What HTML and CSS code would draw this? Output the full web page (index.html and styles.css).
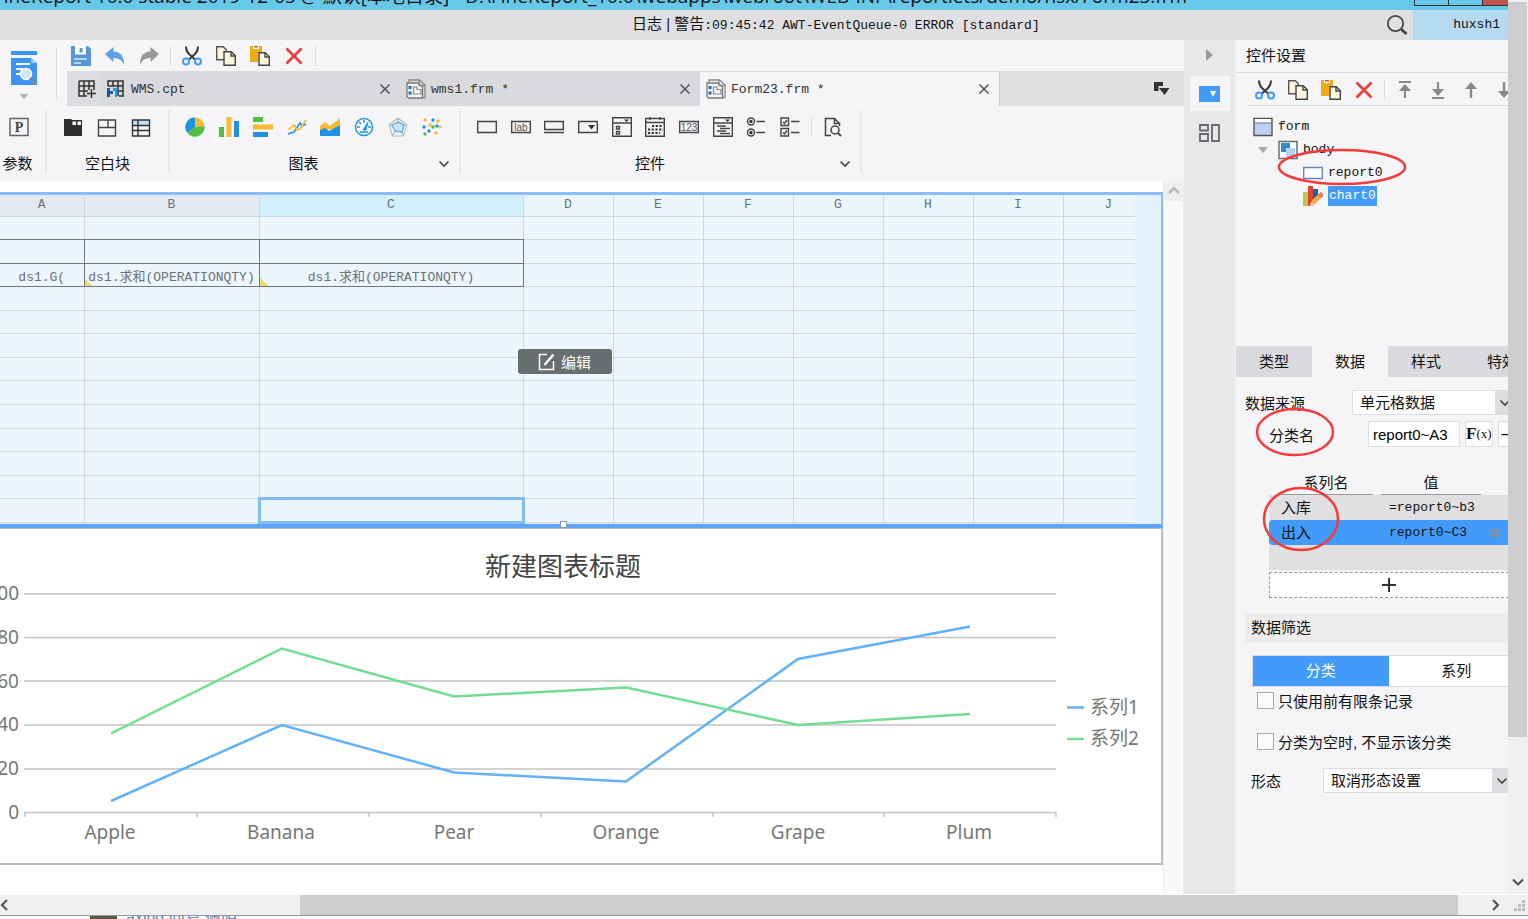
FILE: index.html
```html
<!DOCTYPE html>
<html lang="zh-CN">
<head>
    <meta charset="UTF-8">
    <meta name="viewport" content="width=device-width, initial-scale=1.0">
    <title>FineReport - Form23.frm</title>
    <link rel="stylesheet" href="styles.css">
</head>
<body>
    <!-- shared icons -->
    <svg class="sprite" aria-hidden="true">
        <symbol id="i-cut" viewBox="0 0 20 20">
            <path d="M4 .500C4 4 5 6 7 8l6 5.500M16 .500C16 4 15 6 13 8l-6 5.500" stroke="#3a3a3a" stroke-width="2" fill="none"/>
            <circle cx="4" cy="15.500" r="3" fill="none" stroke="#429bf9" stroke-width="2"/>
            <circle cx="16" cy="15.500" r="3" fill="none" stroke="#429bf9" stroke-width="2"/>
        </symbol>
        <symbol id="i-copy" viewBox="0 0 20 20">
            <path d="M.7.700h6.600l3 3v10H.7z" fill="#fdf5de" stroke="#555" stroke-width="1.400"/>
            <path d="M8 5.700h7.300l4 4v9.600H8z" fill="#fdf5de" stroke="#444" stroke-width="1.400"/>
            <path d="M15 6v4h4" fill="none" stroke="#444" stroke-width="1.400"/>
        </symbol>
        <symbol id="i-paste" viewBox="0 0 20 20">
            <path d="M0 0h12v7H8v9H0z" fill="#f2aa17"/>
            <path d="M3 0h6v3H3z" fill="#fff"/>
            <path d="M4 0h4v1.500H4z" fill="#b8622a"/>
            <path d="M9 6.700h6.300l4 4v8.600H9z" fill="#fdf5de" stroke="#444" stroke-width="1.400"/>
            <path d="M15 7v4h4" fill="none" stroke="#444" stroke-width="1.400"/>
        </symbol>
        <symbol id="i-delete" viewBox="0 0 20 20">
            <path d="M2.500 2.500 17.500 17.500M17.500 2.500 2.500 17.500" stroke="#e8403a" stroke-width="2.800"/>
        </symbol>
        <symbol id="i-close" viewBox="0 0 12 12">
            <path d="M1.500 1.500 10.500 10.500M10.500 1.500 1.500 10.500" stroke="#555" stroke-width="1.500"/>
        </symbol>
        <symbol id="i-chevron" viewBox="0 0 12 12">
            <path d="M1.500 3.500 6 8 10.500 3.500" fill="none" stroke="#444" stroke-width="1.600"/>
        </symbol>
        <symbol id="i-frm" viewBox="0 0 20 20">
            <path d="M3 3.500V1h10.500L19 6v12.500h-2" fill="none" stroke="#888" stroke-width="1.300"/>
            <path d="M1 4h11l4.500 4v11H2.500L1 17.500z" fill="#f5f5f8" stroke="#777" stroke-width="1.300"/>
            <path d="M13 1v5.500h6" fill="none" stroke="#888" stroke-width="1.300"/>
            <path d="M7.500 8h3.500v2.500h4V15H7.500z" fill="none" stroke="#888" stroke-width="1.200"/>
            <path d="M2.500 7h3v3h-3zM2.500 12.500h3v3h-3z" fill="#1b6fb8"/>
        </symbol>
    </svg>

    <div class="frame">
        <div class="screen">
            <header class="titlebar">
                <div class="title-text">FineReport 10.0 stable 2019-12-05 @ 默认[本地目录] - D:\FineReport_10.0\webapps\webroot\WEB-INF\reportlets/demo/hsx/Form23.frm</div>
                <div class="window-buttons">
                    <button aria-label="最小化"></button>
                    <button aria-label="最大化"></button>
                    <button class="win-close" aria-label="关闭"></button>
                </div>
            </header>

            <div class="logbar">
                <div class="log-text">日志 | 警告<span class="mono">:09:45:42 AWT-EventQueue-0 ERROR [standard]</span></div>
                <button class="search" aria-label="搜索">
                    <svg width="22" height="22" viewBox="0 0 22 22"><circle cx="9.500" cy="9.500" r="7.700" fill="none" stroke="#444" stroke-width="1.700"/><path d="m15 15 5.500 5" stroke="#444" stroke-width="2.800"/></svg>
                </button>
                <div class="user mono">huxsh1</div>
            </div>

            <div class="main">
                <div class="workspace">
                    <div class="topbar">
                        <button class="preview" aria-label="预览">
                            <svg width="28" height="36" viewBox="0 0 28 36">
                                <path d="M1 1h26v4H1zM1 8h20l6 5v22H1z" fill="#3c95f6"/>
                                <path d="M21 8l6 5h-6z" fill="#9ccbfb"/>
                                <path d="M6 14h14M6 19h7M6 24h5" stroke="#fff" stroke-width="2"/>
                                <circle cx="16" cy="24" r="5.500" fill="#cfe6f8" stroke="#fff" stroke-width="1.500"/>
                                <path d="m20 28 5 5" stroke="#888" stroke-width="2.600"/>
                            </svg>
                            <svg width="8" height="5" viewBox="0 0 8 5"><path d="M0 0h8L4 5z" fill="#aaa"/></svg>
                        </button>
                        <div class="topbar-right">
                            <div class="quickbar">
                                <button aria-label="保存"><svg class="icon" viewBox="0 0 20 20"><path d="M0 0h17l3 3v17H0z" fill="#5596dd"/><path d="M4 0h11v8.500H4z" fill="#fff"/><path d="M8.500 2h3v4.500h-3z" fill="#5596dd"/><path d="M3 13h13M3 17h7" stroke="#d6e8fa" stroke-width="1.500"/></svg></button>
                                <button aria-label="撤销"><svg class="icon" viewBox="0 0 20 20"><path d="M0 8 8.500 1v4.500C15 6 19.500 10 19 19c-2-5-5-7-10.500-7v4z" fill="#5d9fe6"/></svg></button>
                                <button aria-label="重做"><svg class="icon" viewBox="0 0 20 20"><path d="M20 8 11.500 1v4.500C5 6 .5 10 1 19c2-5 5-7 10.500-7v4z" fill="#999"/></svg></button>
                                <span class="sep"></span>
                                <button aria-label="剪切"><svg class="icon"><use href="#i-cut"/></svg></button>
                                <button aria-label="复制"><svg class="icon"><use href="#i-copy"/></svg></button>
                                <button aria-label="粘贴"><svg class="icon"><use href="#i-paste"/></svg></button>
                                <button aria-label="删除"><svg class="icon"><use href="#i-delete"/></svg></button>
                                <span class="sep"></span>
                            </div>
                            <div class="tabbar">
                                <button class="new-tab" aria-label="新建"><svg class="icon" viewBox="0 0 20 20"><path d="M2 2h15v9M2 2v15h8M2 7h15M2 12h9M7 2v15M12 2v9M10 14.500h9M14.500 10v9" fill="none" stroke="#333" stroke-width="1.500"/></svg></button>
                                <div class="tab mono">
                                    <svg class="icon" viewBox="0 0 20 20"><path d="M2 7V2h15v15h-4M2 7h15M7 2v5M12 2v15M12 12h5" fill="none" stroke="#333" stroke-width="1.500"/><path d="M1 9h3v3h3v3H4v3H1z" fill="#0f5ca8"/><path d="M7 9h4v9H9v-6H7z" fill="#20a0dc"/></svg>
                                    <span>WMS.cpt</span>
                                    <button aria-label="关闭"><svg class="small"><use href="#i-close"/></svg></button>
                                </div>
                                <div class="tab mono">
                                    <svg class="icon"><use href="#i-frm"/></svg>
                                    <span>wms1.frm *</span>
                                    <button aria-label="关闭"><svg class="small"><use href="#i-close"/></svg></button>
                                </div>
                                <div class="tab active mono">
                                    <svg class="icon"><use href="#i-frm"/></svg>
                                    <span>Form23.frm *</span>
                                    <button aria-label="关闭"><svg class="small"><use href="#i-close"/></svg></button>
                                </div>
                                <button class="tab-list" aria-label="全部标签"><svg width="16" height="14" viewBox="0 0 16 14"><path d="M0 0h9v4H4.500v5H0zM5 6h10.500l-5 7z" fill="#333"/></svg></button>
                            </div>
                        </div>
                    </div>

                    <div class="ribbon">
                        <section class="group group-param">
                            <div class="group-icons">
                                <button aria-label="参数"><svg class="icon" viewBox="0 0 20 20"><path d="M1 1.500h18v17H1z" fill="none" stroke="#666" stroke-width="1.500"/><text class="glyph-p" x="10" y="15" text-anchor="middle">P</text></svg></button>
                            </div>
                            <div class="group-label"><span>参数</span></div>
                        </section>
                        <section class="group group-blank">
                            <div class="group-icons">
                                <button aria-label="报表块"><svg class="icon" viewBox="0 0 20 20"><path d="M1 2h7l1 1h10v16H1z" fill="#2e2e30"/><path d="M9.500 4.500h3.500V8H9.500zM14.500 4.500H18V8h-3.500z" fill="#fff"/></svg></button>
                                <button aria-label="tab块"><svg class="icon" viewBox="0 0 20 20"><path d="M1.500 3h17v16h-17zM1.500 10.500h17M11 3v7.500" fill="none" stroke="#444" stroke-width="1.400"/></svg></button>
                                <button aria-label="绝对画布块"><svg class="icon" viewBox="0 0 20 20"><path d="M1.500 3h17v5h-17z" fill="#bfe3f7"/><path d="M1.500 3h17v16h-17zM1.500 8.500h17M1.500 13.500h17M7 3v16" fill="none" stroke="#333" stroke-width="1.400"/></svg></button>
                            </div>
                            <div class="group-label"><span>空白块</span></div>
                        </section>
                        <section class="group group-chart">
                            <div class="group-icons">
                                <button aria-label="饼图"><svg class="icon" viewBox="0 0 20 20"><path d="M10 10V.500A9.500 9.500 0 0 0 2.500 16z" fill="#1e93e6"/><path d="M10 10V.500A9.500 9.500 0 0 1 19.500 9z" fill="#fbb833"/><path d="M10 10 19.500 9A9.500 9.500 0 0 1 2.500 16z" fill="#53c03f"/></svg></button>
                                <button aria-label="柱形图"><svg class="icon" viewBox="0 0 20 20"><path d="M0 10h5v10H0z" fill="#53c03f"/><path d="M7.500 0h5v20h-5z" fill="#fbb833"/><path d="M15 4h5v16h-5z" fill="#1e93e6"/></svg></button>
                                <button aria-label="条形图"><svg class="icon" viewBox="0 0 20 20"><path d="M0 0h10v5H0z" fill="#53c03f"/><path d="M0 7.500h20v5H0z" fill="#fbb833"/><path d="M0 15h15v5H0z" fill="#1e93e6"/></svg></button>
                                <button aria-label="折线图"><svg class="icon" viewBox="0 0 20 20"><path d="m1 17 6-2 6-9 2 3 4-2" fill="none" stroke="#1e93e6" stroke-width="1.600"/><path d="m1 13 6-5 3 5 3-1 6-9" fill="none" stroke="#fbb833" stroke-width="1.600"/></svg></button>
                                <button aria-label="面积图"><svg class="icon" viewBox="0 0 20 20"><path d="M0 9 5 5l5 4L20 1v10L0 14z" fill="#fbb833"/><path d="m0 13 5-2 4 3 11-6v11H0z" fill="#1e93e6"/></svg></button>
                                <button aria-label="仪表盘"><svg class="icon" viewBox="0 0 20 20"><circle cx="10" cy="10" r="8.500" fill="#fff" stroke="#1e93e6" stroke-width="1.500"/><path d="M10 3v3M3 10h3M14 10h3M5 5l2 2M6 15h8" stroke="#1e93e6" stroke-width="1.500"/><path d="m9 13 5-8-2 8z" fill="#1e93e6" stroke="#1e93e6"/></svg></button>
                                <button aria-label="雷达图"><svg class="icon" viewBox="0 0 20 20"><path d="m10 1 9 7-3.500 11h-11L1 8zM10 1v9l9-2M10 10l5.500 9M10 10l-5.500 9M10 10 1 8" fill="none" stroke="#bbb" stroke-width="1.200"/><path d="m10 5 6 3-2 7-7-1-3-6z" fill="#cceafb" fill-opacity=".6" stroke="#58b5ee" stroke-width="1.400"/></svg></button>
                                <button aria-label="散点图"><svg class="icon" viewBox="0 0 20 20"><g fill="#fbb833"><circle cx="3" cy="3" r="1.700"/><circle cx="16" cy="4" r="1.700"/><circle cx="8" cy="8" r="1.700"/><circle cx="14" cy="16" r="1.700"/><circle cx="18" cy="10" r="1.500"/></g><g fill="#1e93e6"><circle cx="11" cy="3" r="1.700"/><circle cx="2" cy="10" r="1.700"/><circle cx="15" cy="9" r="1.700"/><circle cx="7" cy="14" r="1.700"/></g><g fill="#53c03f"><circle cx="11" cy="10" r="1.800"/><circle cx="3" cy="17" r="1.700"/></g></svg></button>
                            </div>
                            <div class="group-label"><span>图表</span><button aria-label="更多图表"><svg class="small"><use href="#i-chevron"/></svg></button></div>
                        </section>
                        <section class="group group-widget">
                            <div class="group-icons">
                                <button aria-label="文本"><svg class="icon" viewBox="0 0 20 20"><path d="M.7 4.500h18.600v11H.7z" fill="none" stroke="#444" stroke-width="1.400"/></svg></button>
                                <button aria-label="标签"><svg class="icon" viewBox="0 0 20 20"><path d="M.7 4.500h18.600v11H.7z" fill="none" stroke="#444" stroke-width="1.400"/><text class="glyph-s" x="10" y="14" text-anchor="middle">lab</text></svg></button>
                                <button aria-label="按钮"><svg class="icon" viewBox="0 0 20 20"><path d="M.7 4.500h18.600v8H.7zM0 15.500h20" fill="none" stroke="#444" stroke-width="1.400"/></svg></button>
                                <button aria-label="下拉框"><svg class="icon" viewBox="0 0 20 20"><path d="M.7 4.500h18.600v11H.7z" fill="none" stroke="#444" stroke-width="1.400"/><path d="M10 8h7l-3.500 4.500z" fill="#333"/></svg></button>
                                <button aria-label="下拉复选框"><svg class="icon" viewBox="0 0 20 20"><path d="M.7.700h18.600v18.600H.7zM.7 6h18.600M4.500 9.500h3v2.500h-3zM4.500 14.500h3v2.500h-3z" fill="none" stroke="#444" stroke-width="1.400"/><path d="M12 2.500h5L14.500 5z" fill="#333"/></svg></button>
                                <button aria-label="日期"><svg class="icon" viewBox="0 0 20 20"><path d="M.7 1.500h18.600v17.800H.7zM.7 5.500h18.600M5 0v3M15 0v3" fill="none" stroke="#444" stroke-width="1.400"/><path d="M7 9h11M3 12.500h15M3 16h12" stroke="#333" stroke-width="2.200" stroke-dasharray="2.200 1.500"/></svg></button>
                                <button aria-label="数字"><svg class="icon" viewBox="0 0 20 20"><path d="M.7 4.500h18.600v11H.7z" fill="none" stroke="#444" stroke-width="1.400"/><text class="glyph-s" x="10" y="14" text-anchor="middle">123</text></svg></button>
                                <button aria-label="树"><svg class="icon" viewBox="0 0 20 20"><path d="M.7.700h18.600v18.600H.7zM.7 6h18.600M4 9h9M7 11.500h10M4 14h9M7 16.500h10" fill="none" stroke="#444" stroke-width="1.400"/><path d="M12 2.500h5L14.500 5z" fill="#333"/></svg></button>
                                <button aria-label="单选按钮组"><svg class="icon" viewBox="0 0 20 20"><g fill="none" stroke="#444" stroke-width="1.400"><circle cx="5" cy="4.500" r="3.500"/><circle cx="5" cy="15.500" r="3.500"/><path d="M10.500 4.500H19M10.500 15.500H19"/></g><circle cx="5" cy="4.500" r="1.700" fill="#333"/><circle cx="5" cy="15.500" r="1.700" fill="#333"/></svg></button>
                                <button aria-label="复选按钮组"><svg class="icon" viewBox="0 0 20 20"><path d="M1 1h7.500v7.500H1zM1 11.500h7.500V19H1zM11 4.500h8.500M11 15.500h8.500M3 5l1.500 1.500L7 3M3 15.500 4.500 17 7 13.500" fill="none" stroke="#444" stroke-width="1.400"/></svg></button>
                            </div>
                            <span class="sep pre"></span>
                            <button class="pre-btn" aria-label="预定义控件"><svg class="icon" viewBox="0 0 20 20"><path d="M8 18.500H2.500v-17h9l5 5V9M11.500 1.500v5h5" fill="none" stroke="#444" stroke-width="1.500"/><circle cx="12" cy="13" r="4" fill="none" stroke="#444" stroke-width="1.500"/><path d="m15 16 3 3" stroke="#444" stroke-width="1.800"/></svg></button>
                            <div class="group-label"><span>控件</span><button aria-label="更多控件"><svg class="small"><use href="#i-chevron"/></svg></button></div>
                        </section>
                    </div>

                    <div class="editor">
                        <div class="canvas">
                            <div class="report-block">
                                <table class="sheet">
                                    <colgroup>
                                        <col class="col-a"><col class="col-b"><col class="col-c">
                                        <col class="col-n"><col class="col-n"><col class="col-n"><col class="col-n"><col class="col-n"><col class="col-n"><col>
                                    </colgroup>
                                    <thead>
                                        <tr><th class="used">A</th><th class="used">B</th><th class="current">C</th><th>D</th><th>E</th><th>F</th><th>G</th><th>H</th><th>I</th><th>J</th></tr>
                                    </thead>
                                    <tbody>
                                        <tr><td class="above-box"></td><td class="above-box"></td><td class="above-box"></td><td></td><td></td><td></td><td></td><td></td><td></td><td></td></tr>
                                        <tr><td class="boxed"></td><td class="boxed"></td><td class="boxed"></td><td></td><td></td><td></td><td></td><td></td><td></td><td></td></tr>
                                        <tr><td class="boxed">ds1.G(</td><td class="boxed bound">ds1.求和(OPERATIONQTY)</td><td class="boxed bound">ds1.求和(OPERATIONQTY)</td><td></td><td></td><td></td><td></td><td></td><td></td><td></td></tr>
                                        <tr><td></td><td></td><td></td><td></td><td></td><td></td><td></td><td></td><td></td><td></td></tr>
                                        <tr><td></td><td></td><td></td><td></td><td></td><td></td><td></td><td></td><td></td><td></td></tr>
                                        <tr><td></td><td></td><td></td><td></td><td></td><td></td><td></td><td></td><td></td><td></td></tr>
                                        <tr><td></td><td></td><td></td><td></td><td></td><td></td><td></td><td></td><td></td><td></td></tr>
                                        <tr><td></td><td></td><td></td><td></td><td></td><td></td><td></td><td></td><td></td><td></td></tr>
                                        <tr><td></td><td></td><td></td><td></td><td></td><td></td><td></td><td></td><td></td><td></td></tr>
                                        <tr><td></td><td></td><td></td><td></td><td></td><td></td><td></td><td></td><td></td><td></td></tr>
                                        <tr><td></td><td></td><td></td><td></td><td></td><td></td><td></td><td></td><td></td><td></td></tr>
                                        <tr><td></td><td></td><td></td><td></td><td></td><td></td><td></td><td></td><td></td><td></td></tr>
                                        <tr><td></td><td></td><td class="selected"></td><td></td><td></td><td></td><td></td><td></td><td></td><td></td></tr>
                                    </tbody>
                                </table>
                                <button class="edit-btn"><svg width="18" height="18" viewBox="0 0 18 18"><path d="M9 1.500H1.500v15h14V8" fill="none" stroke="#fff" stroke-width="1.500"/><path d="M15.500 1.500 6.500 12" stroke="#fff" stroke-width="2.400"/></svg>编辑</button>
                                <span class="handle"></span>
                            </div>
                            <div class="chart-block">
                                <svg class="chart" viewBox="0 0 1161 334" role="img" aria-label="新建图表标题">
                                    <text class="chart-title" x="563" y="47" text-anchor="middle">新建图表标题</text>
                                    <g class="grid-lines">
                                        <path d="M24 65h1032M24 108.500h1032M24 152h1032M24 196h1032M24 240h1032M24 283.500h1032"/>
                                        <path d="M25 283v5M197 283v5M369 283v5M541 283v5M713 283v5M884 283v5M1056 283v5"/>
                                    </g>
                                    <g class="axis" text-anchor="end">
                                        <text x="19" y="71">100</text>
                                        <text x="19" y="115">80</text>
                                        <text x="19" y="159">60</text>
                                        <text x="19" y="202">40</text>
                                        <text x="19" y="246">20</text>
                                        <text x="19" y="290">0</text>
                                    </g>
                                    <g class="axis" text-anchor="middle">
                                        <text x="110" y="310">Apple</text>
                                        <text x="281" y="310">Banana</text>
                                        <text x="454" y="310">Pear</text>
                                        <text x="626" y="310">Orange</text>
                                        <text x="798" y="310">Grape</text>
                                        <text x="969" y="310">Plum</text>
                                    </g>
                                    <polyline class="series-1" points="111,272 282,196 454,243.500 626,252.500 798,130 970,97.500"/>
                                    <polyline class="series-2" points="111,204.500 282,119.500 454,167.500 626,158.500 798,196 970,185"/>
                                    <path class="series-1" d="M1067 178.500h17"/>
                                    <path class="series-2" d="M1067 210h17"/>
                                    <text class="axis" x="1090" y="185">系列1</text>
                                    <text class="axis" x="1090" y="216">系列2</text>
                                </svg>
                            </div>
                        </div>
                        <div class="editor-scroll"><svg width="20" height="20" viewBox="0 0 20 20"><path d="m5 12 5-5 5 5" fill="none" stroke="#bbb" stroke-width="2.500"/></svg></div>
                    </div>
                </div>

                <nav class="rail">
                    <button class="collapse" aria-label="收起"><svg width="8" height="12" viewBox="0 0 8 12"><path d="M0 0v12l7-6z" fill="#999"/></svg></button>
                    <button class="rail-active" aria-label="控件设置"><svg width="21" height="16" viewBox="0 0 21 16"><path d="M0 0h21v16H0z" fill="#429bf9"/><path d="M11 5h6l-3 6z" fill="#fff"/></svg></button>
                    <button aria-label="组件库"><svg width="21" height="18" viewBox="0 0 21 18"><path d="M1 1h8v5.500H1zM1 10h8v7H1zM13 1h7v16h-7z" fill="none" stroke="#666872" stroke-width="1.800"/></svg></button>
                </nav>

                <aside class="panel">
                    <h2>控件设置</h2>
                    <div class="panel-tools">
                        <button aria-label="剪切"><svg class="icon"><use href="#i-cut"/></svg></button>
                        <button aria-label="复制"><svg class="icon"><use href="#i-copy"/></svg></button>
                        <button aria-label="粘贴"><svg class="icon"><use href="#i-paste"/></svg></button>
                        <button aria-label="删除"><svg class="icon"><use href="#i-delete"/></svg></button>
                        <span class="sep"></span>
                        <button aria-label="置于顶层"><svg class="icon" viewBox="0 0 20 20"><path d="M4 2h12M10 18V8" stroke="#888" stroke-width="2.200"/><path d="m4 11 6-7 6 7z" fill="#888"/></svg></button>
                        <button aria-label="置于底层"><svg class="icon" viewBox="0 0 20 20"><path d="M4 18h12M10 2v9" stroke="#888" stroke-width="2.200"/><path d="m4 9 6 7 6-7z" fill="#888"/></svg></button>
                        <button aria-label="上移"><svg class="icon" viewBox="0 0 20 20"><path d="M10 18V6" stroke="#888" stroke-width="2.400"/><path d="m4 9 6-7 6 7z" fill="#888"/></svg></button>
                        <button aria-label="下移"><svg class="icon" viewBox="0 0 20 20"><path d="M10 2v12" stroke="#888" stroke-width="2.400"/><path d="m4 11 6 7 6-7z" fill="#888"/></svg></button>
                    </div>

                    <div class="tree mono">
                        <div class="node"><svg class="icon" viewBox="0 0 20 20"><path d="M1 1.500h18v17H1z" fill="#bbd2f3" stroke="#555" stroke-width="1.400"/><path d="M2 2h16v4H2z" fill="#fff"/><path d="M1 6h18" stroke="#777"/></svg><span>form</span></div>
                        <div class="node level-1"><svg class="twisty" width="10" height="6" viewBox="0 0 10 6"><path d="M0 0h10L5 6z" fill="#aaa"/></svg><svg class="icon" viewBox="0 0 20 20"><path d="M1 1.500h18v17H1z" fill="#fff" stroke="#666" stroke-width="1.400"/><path d="M3 3h9v9H3z" fill="#318ccc"/><path d="M8 8h9v9H8z" fill="#b7d0f5"/></svg><span>body</span></div>
                        <div class="node level-2"><svg class="icon" viewBox="0 0 20 20"><path d="M.7 4.500h18.600v11H.7z" fill="#fff" stroke="#6a87bd" stroke-width="1.400"/></svg><span>report0</span></div>
                        <div class="node level-2"><svg class="icon" viewBox="0 0 20 20"><path d="M0 6h5v14H0z" fill="#b4cc4a"/><path d="M5 0h5v20H5z" fill="#e5412f"/><path d="M10 3h5v12h-5z" fill="#1763a5"/><path d="m7 20 2-6 9-8 3 3-9 9z" fill="#f3a64a"/><path d="m7 20 1-4 3 3z" fill="#f6dcc0"/><path d="m15 9 3-3 3 3-3 3z" fill="#ea7a4f"/></svg><span class="picked">chart0</span></div>
                        <svg class="mark mark-report" viewBox="0 0 130 38"><ellipse cx="65" cy="19" rx="63" ry="17"/></svg>
                    </div>

                    <div class="panel-tabs">
                        <button>类型</button><button class="on">数据</button><button>样式</button><button>特效</button>
                    </div>

                    <div class="form">
                        <div class="row row-source">
                            <label for="source">数据来源</label>
                            <span class="dropdown"><select id="source"><option>单元格数据</option></select><svg class="small"><use href="#i-chevron"/></svg></span>
                        </div>
                        <div class="row row-category">
                            <label for="category">分类名</label>
                            <input type="text" id="category" value="report0~A3">
                            <button class="fx">F<small>(x)</small></button>
                            <button class="fx minus">–</button>
                            <svg class="mark mark-category" viewBox="0 0 80 50"><ellipse cx="40" cy="25" rx="38" ry="23"/></svg>
                        </div>

                        <div class="series">
                            <table>
                                <thead><tr><th><span>系列名</span></th><th><span>值</span></th><th></th></tr></thead>
                                <tbody>
                                    <tr><td>入库</td><td class="mono">=report0~b3</td><td></td></tr>
                                    <tr class="picked"><td>出入</td><td class="mono">report0~C3</td><td><button aria-label="删除系列"><svg class="small" viewBox="0 0 12 12"><path d="m2 2 8 8M10 2l-8 8" stroke="#8a8f96" stroke-width="2.600"/></svg></button></td></tr>
                                    <tr><td></td><td></td><td></td></tr>
                                </tbody>
                            </table>
                            <button class="add" aria-label="添加系列"><svg width="16" height="16" viewBox="0 0 16 16"><path d="M8 1v14M1 8h14" stroke="#333" stroke-width="2"/></svg></button>
                            <svg class="mark mark-series" viewBox="0 0 78 66"><ellipse cx="39" cy="33" rx="37" ry="31"/></svg>
                        </div>

                        <h3>数据筛选</h3>
                        <div class="segment"><button class="on">分类</button><button>系列</button></div>
                        <div class="check"><input type="checkbox" id="limit"><label for="limit">只使用前有限条记录</label></div>
                        <div class="check"><input type="checkbox" id="hideEmpty"><label for="hideEmpty">分类为空时, 不显示该分类</label></div>
                        <div class="row row-form">
                            <label for="shape">形态</label>
                            <span class="dropdown"><select id="shape"><option>取消形态设置</option></select><svg class="small"><use href="#i-chevron"/></svg></span>
                        </div>
                    </div>
                </aside>
            </div>
        </div>

        <div class="vscroll">
            <div class="vthumb"></div>
            <svg class="small" viewBox="0 0 12 12"><path d="M1 3.500 6 8.500 11 3.500" fill="none" stroke="#555" stroke-width="2.200"/></svg>
        </div>
    </div>

    <div class="hscroll">
        <svg class="small" viewBox="0 0 12 12"><path d="M7 1 2 6l5 5" fill="none" stroke="#555" stroke-width="2.200"/></svg>
        <div class="hthumb"></div>
        <svg class="small arrow-right" viewBox="0 0 12 12"><path d="m3 1 5 5-5 5" fill="none" stroke="#555" stroke-width="2.200"/></svg>
        <svg class="small" viewBox="0 0 12 12"><path d="M9 1h3v3H9zM5 5h3v3H5zM9 5h3v3H9zM1 9h3v3H1zM5 9h3v3H5zM9 9h3v3H9z" fill="#bbb"/></svg>
    </div>
    <footer class="behind">
        <span class="avatar"></span>
        <a href="#">axing 回复 佩陌</a>
    </footer>
</body>
</html>
```
FILE: styles.css
```css
* {
    margin: 0;
    padding: 0;
    box-sizing: border-box;
}

body {
    display: flex;
    flex-direction: column;
    height: 100vh;
    overflow: hidden;
    background: #fff;
    color: #111;
    font-family: "Liberation Sans", "Noto Sans CJK SC", sans-serif;
    font-size: 15px;
}

button {
    display: flex;
    align-items: center;
    justify-content: center;
    border: none;
    background: none;
    color: inherit;
    font: inherit;
    cursor: pointer;
}

svg {
    display: block;
    flex: none;
}

.sprite {
    position: absolute;
    width: 0;
    height: 0;
}

.icon {
    width: 20px;
    height: 20px;
}

.small {
    width: 12px;
    height: 12px;
}

.mono {
    font-family: "Liberation Mono", "Noto Sans CJK SC", monospace;
    font-size: 13px;
}

.sep {
    width: 1px;
    height: 20px;
    margin: 0 -3px;
    background: #dcdcdc;
}

.mark {
    position: absolute;
    fill: none;
    stroke: #f63a3a;
    stroke-width: 2.5;
    pointer-events: none;
}

.frame {
    display: flex;
    flex: 1;
    min-height: 0;
}

.screen {
    display: flex;
    flex: 1;
    flex-direction: column;
    min-width: 0;
    background: #f5f5f8;
}

/* title and log bars */
.titlebar {
    display: flex;
    align-items: flex-end;
    justify-content: space-between;
    height: 10px;
    overflow: hidden;
    background: #66c9ea;
}

.title-text {
    font-family: "Open Sans", "Noto Sans CJK SC", sans-serif;
    font-size: 19px;
    line-height: 28px;
    text-indent: -6px;
    white-space: nowrap;
}

.window-buttons {
    display: flex;
    align-self: flex-start;
}

.window-buttons button {
    width: 34px;
    height: 6px;
    border: 1px solid #333;
    border-top: none;
    border-right: none;
}

.window-buttons .win-close {
    width: 26px;
    background: #c1554e;
}

.logbar {
    display: flex;
    align-items: center;
    height: 30px;
    background: #e0e0e2;
}

.log-text {
    flex: 1;
    padding-left: 632px;
    line-height: 20px;
    white-space: nowrap;
}

.search {
    width: 32px;
}

.user {
    width: 95px;
    padding-right: 8px;
    background: #b6daf1;
    line-height: 30px;
    text-align: right;
}

.main {
    display: flex;
    flex: 1;
    min-height: 0;
}

.workspace {
    display: flex;
    flex: 1;
    flex-direction: column;
    min-width: 0;
}

/* toolbar and file tabs */
.topbar {
    display: flex;
    height: 66px;
}

.preview {
    flex-direction: column;
    gap: 8px;
    width: 57px;
    margin: 8px 0 6px;
    padding-right: 8px;
    border-right: 1px solid #dcdcdc;
}

.topbar-right {
    flex: 1;
    padding-left: 10px;
}

.quickbar {
    display: flex;
    align-items: center;
    gap: 14px;
    height: 31px;
    padding-left: 4px;
}

.tabbar {
    display: flex;
    height: 35px;
    background: #e0e0e2;
}

.new-tab {
    width: 33px;
    padding-left: 6px;
    background: #dcdde0;
}

.tab {
    display: flex;
    align-items: center;
    gap: 5px;
    width: 300px;
    padding: 0 9px 0 6px;
    border-top: 1px solid #dcdde0;
    background: #d9dadd;
    color: #333;
}

.tab span {
    flex: 1;
}

.tab.active {
    border-right: 1px solid #ccc;
    background: #f5f5f8;
}

.tab-list {
    margin-left: auto;
    padding-right: 14px;
}

/* ribbon */
.ribbon {
    display: flex;
    height: 75px;
    padding: 4px 0 8px;
}

.group {
    display: flex;
    flex-wrap: wrap;
    align-content: space-between;
    align-items: center;
    border-right: 2px solid #ece9e0;
}

.group-icons {
    display: flex;
    justify-content: space-between;
    height: 34px;
}

.group-label {
    display: flex;
    width: 100%;
    height: 18px;
    line-height: 18px;
}

.group-label span {
    flex: 1;
    text-align: center;
}

.group-param {
    width: 47px;
    padding-right: 10px;
}

.group-param .group-icons {
    padding-left: 9px;
}

.group-blank {
    width: 123px;
}

.group-blank .group-icons {
    width: 104px;
    padding-left: 16px;
}

.group-chart {
    width: 291px;
    padding: 0 9px 0 15px;
}

.group-chart .group-icons {
    width: 257px;
}

.group-widget {
    width: 401px;
    padding: 0 9px 0 16px;
}

.group-chart .group-label span,
.group-widget .group-label span {
    padding-right: 16px;
}

.group-widget .group-icons {
    width: 323px;
}

.group-widget .pre {
    margin: 0 11px;
}

.glyph-p {
    font-family: "Liberation Serif", serif;
    font-size: 14px;
    font-weight: bold;
    fill: #444;
}

.glyph-s {
    font-family: "Liberation Sans", sans-serif;
    font-size: 10px;
    fill: #555;
}

/* design canvas */
.editor {
    display: flex;
    flex: 1;
    min-height: 0;
}

.canvas {
    flex: 1;
    min-width: 0;
    padding-top: 11px;
    background: #fff;
}

.report-block {
    position: relative;
    padding-right: 26px;
    border: solid #8bbef8;
    border-width: 3px 2px 4px 0;
    border-bottom-color: #5ca4f7;
    background: #e5f2fc;
}

.sheet {
    width: 100%;
    height: 329px;
    border-collapse: collapse;
    table-layout: fixed;
    background: #ecf6fe;
    color: #6b7178;
    font-family: "Liberation Mono", "Noto Sans CJK SC", monospace;
    font-size: 13px;
    line-height: 16px;
}

.col-a {
    width: 84px;
}

.col-b {
    width: 175px;
}

.col-c {
    width: 264px;
}

.col-n {
    width: 90px;
}

.sheet th,
.sheet td {
    border: 1px solid #cddae3;
    border-width: 0 1px 1px 0;
    text-align: center;
    white-space: nowrap;
}

.sheet th {
    height: 21px;
    font-weight: normal;
}

.sheet td {
    height: 23px;
    vertical-align: bottom;
}

.sheet th:last-child,
.sheet td:last-child {
    padding-left: 18px;
    border-right: none;
}

.sheet th.used {
    background: #e3eaf4;
}

.sheet th.current {
    background: #d2effb;
}

.sheet td.above-box {
    border-bottom-color: #707780;
}

.sheet td.boxed {
    border: 1px solid #707780;
}

.sheet td.boxed:first-child {
    border-left: none;
}

.sheet td.bound {
    background: linear-gradient(to top right, #ecd97a 50%, transparent 50%) left bottom / 8px 8px no-repeat;
}

.sheet td.selected {
    border: 3px solid #82bbf8;
}

.edit-btn {
    position: absolute;
    top: 154px;
    left: 50%;
    gap: 5px;
    width: 94px;
    height: 25px;
    margin-left: -63px;
    border-radius: 3px;
    background: #696e71;
    color: #fff;
}

.handle {
    position: absolute;
    bottom: -4px;
    left: 560px;
    width: 7px;
    height: 7px;
    border: 1px solid #8f9aa5;
    background: #fff;
}

.chart-block {
    border: solid #bdbdbd;
    border-width: 1px 2px 2px 0;
}

.chart {
    width: 100%;
    font-family: "Noto Sans", "Noto Sans CJK SC", sans-serif;
}

.chart-title {
    font-size: 26px;
    fill: #444;
}

.grid-lines {
    stroke: #c4c4c4;
    stroke-width: 1.5;
}

.axis {
    font-size: 19px;
    fill: #777;
}

.series-1 {
    fill: none;
    stroke: #63b2f7;
    stroke-width: 2.5;
}

.series-2 {
    fill: none;
    stroke: #74dd92;
    stroke-width: 2.5;
}

.editor-scroll {
    width: 21px;
    border-right: 1px solid #eeebe2;
    border-left: 1px solid #f0ebe4;
    background: #f9f9f7;
}

.editor-scroll svg {
    background: #efefef;
}

/* side rail */
.rail {
    display: flex;
    flex-direction: column;
    align-items: center;
    width: 51px;
    background: #e8e8e8;
}

.rail button {
    width: 40px;
    height: 44px;
}

.rail .collapse {
    height: 30px;
    margin-bottom: 6px;
}

.rail .rail-active {
    height: 35px;
    background: #f5f5f8;
}

/* properties panel */
.panel {
    width: 273px;
    overflow: hidden;
}

.panel h2 {
    height: 33px;
    padding-left: 11px;
    border-bottom: 1px solid #dcdcdc;
    font-size: 15px;
    font-weight: normal;
    line-height: 32px;
}

.panel-tools {
    display: flex;
    align-items: center;
    gap: 13px;
    width: 300px;
    height: 33px;
    margin-left: 12px;
    padding: 2px 0 0 8px;
    border-bottom: 1px solid #dcdcdc;
}

.tree {
    position: relative;
    height: 240px;
    padding: 9px 0 0 18px;
}

.node {
    display: flex;
    align-items: center;
    gap: 5px;
    height: 23px;
}

.node span {
    line-height: 20px;
}

.node.level-1 {
    padding-left: 5px;
    gap: 10px;
}

.node.level-1 span {
    margin-left: -5px;
}

.node.level-2 {
    padding-left: 50px;
}

.tree .picked {
    padding: 0 1px;
    background: #429bf9;
    color: #fff;
}

.mark-report {
    top: 42px;
    left: 42px;
    width: 130px;
    height: 38px;
}

.panel-tabs {
    display: flex;
    width: 305px;
    padding-left: 1px;
}

.panel-tabs button {
    width: 76px;
    height: 31px;
    padding-bottom: 2px;
    background: #d9dadd;
}

.panel-tabs .on {
    background: none;
}

.form {
    width: 290px;
    padding: 13px 0 0 10px;
}

.row {
    position: relative;
    display: flex;
    align-items: center;
}

.row label {
    flex: none;
}

.dropdown {
    display: flex;
    align-items: center;
    height: 25px;
    border: 1px solid #dcdde0;
    background: #dcdde0;
}

.dropdown select {
    flex: 1;
    height: 23px;
    margin-right: 4px;
    padding-left: 7px;
    border: none;
    appearance: none;
    background: #fff;
    color: #111;
    font: inherit;
}

.row-source .dropdown {
    width: 160px;
    margin-left: 47px;
}

.row-category {
    gap: 5px;
    margin-top: 6px;
    padding-left: 24px;
}

.row-category input {
    width: 92px;
    height: 26px;
    margin-left: 49px;
    padding-left: 4px;
    border: 1px solid #dcdde0;
    background: #fff;
    font: inherit;
}

.fx {
    width: 29px;
    height: 26px;
    border: 1px solid #dcdde0;
    background: #fff;
    font-family: "Liberation Serif", serif;
    font-size: 17px;
    font-weight: bold;
}

.fx small {
    font-size: 13px;
    font-weight: normal;
}

.fx.minus {
    justify-content: flex-start;
    padding-left: 3px;
}

.mark-category {
    top: -14px;
    left: 10px;
    width: 80px;
    height: 50px;
}

.series {
    position: relative;
    width: 240px;
    margin: 23px 0 0 24px;
}

.series table {
    width: 100%;
    border-spacing: 0;
    table-layout: fixed;
    background: #e0e0e2;
}

.series th {
    height: 25px;
    padding: 0 4px 0 10px;
    background: #f5f5f8;
    font-weight: normal;
}

.series th:first-child {
    width: 108px;
}

.series th:nth-child(2) {
    width: 108px;
    padding-left: 4px;
}

.series th:last-child {
    padding: 0;
}

.series th span {
    display: block;
    height: 25px;
    border-bottom: 1px solid #999;
    line-height: 25px;
}

.series td {
    height: 25px;
    padding-left: 12px;
    line-height: 24px;
}

.series td:last-child {
    padding-left: 4px;
}

.series .picked td {
    background: #429bf9;
}

.series .picked td:first-child {
    border-radius: 4px 0 0 4px;
}

.add {
    width: 100%;
    height: 26px;
    margin-top: 2px;
    border: 1px dashed #999;
    background: #fff;
}

.mark-series {
    top: 16px;
    left: -7px;
    width: 78px;
    height: 66px;
}

.form h3 {
    margin-top: 15px;
    padding-left: 6px;
    background: #ececec;
    font-size: 15px;
    font-weight: normal;
    line-height: 30px;
}

.segment {
    display: flex;
    margin: 12px 0 0 7px;
    border: 1px solid #dcdde0;
}

.segment button {
    width: 136px;
    height: 30px;
    padding-bottom: 3px;
    background: #fff;
}

.segment .on {
    background: #429bf9;
    color: #fff;
}

.check {
    display: flex;
    align-items: center;
    gap: 4px;
    height: 24px;
    margin: 1px 0 17px 12px;
}

.check input {
    width: 17px;
    height: 17px;
    border: 1px solid #aaa;
    appearance: none;
    background: #fafafa;
}

.row-form {
    margin-top: -2px;
    padding-left: 6px;
}

.row-form .dropdown {
    width: 186px;
    margin-left: 42px;
}

/* outer scrollbars */
.vscroll {
    display: flex;
    flex-direction: column;
    align-items: center;
    justify-content: space-between;
    width: 20px;
    padding: 2px 1px 6px 0;
    background: #f0f0f0;
}

.vthumb {
    width: 19px;
    height: 83%;
    background: #cdcdcd;
}

.hscroll {
    display: flex;
    align-items: center;
    height: 22px;
    padding-right: 3px;
    border-top: 1px solid #fff;
    border-bottom: 1px solid #999;
    background: #f0f0f0;
}

.hthumb {
    flex: 1;
    height: 20px;
    margin: 0 32px 0 288px;
    background: #cdcdcd;
}

.arrow-right {
    margin-right: 11px;
}

.behind {
    display: flex;
    align-items: center;
    gap: 9px;
    height: 3px;
    padding-left: 90px;
    overflow: hidden;
    background: #fbfbfd;
}

.behind a {
    color: #5b83ad;
    font-size: 16px;
    line-height: 20px;
    text-decoration: none;
}

.avatar {
    width: 27px;
    height: 3px;
    background: #5c5342;
}
```
